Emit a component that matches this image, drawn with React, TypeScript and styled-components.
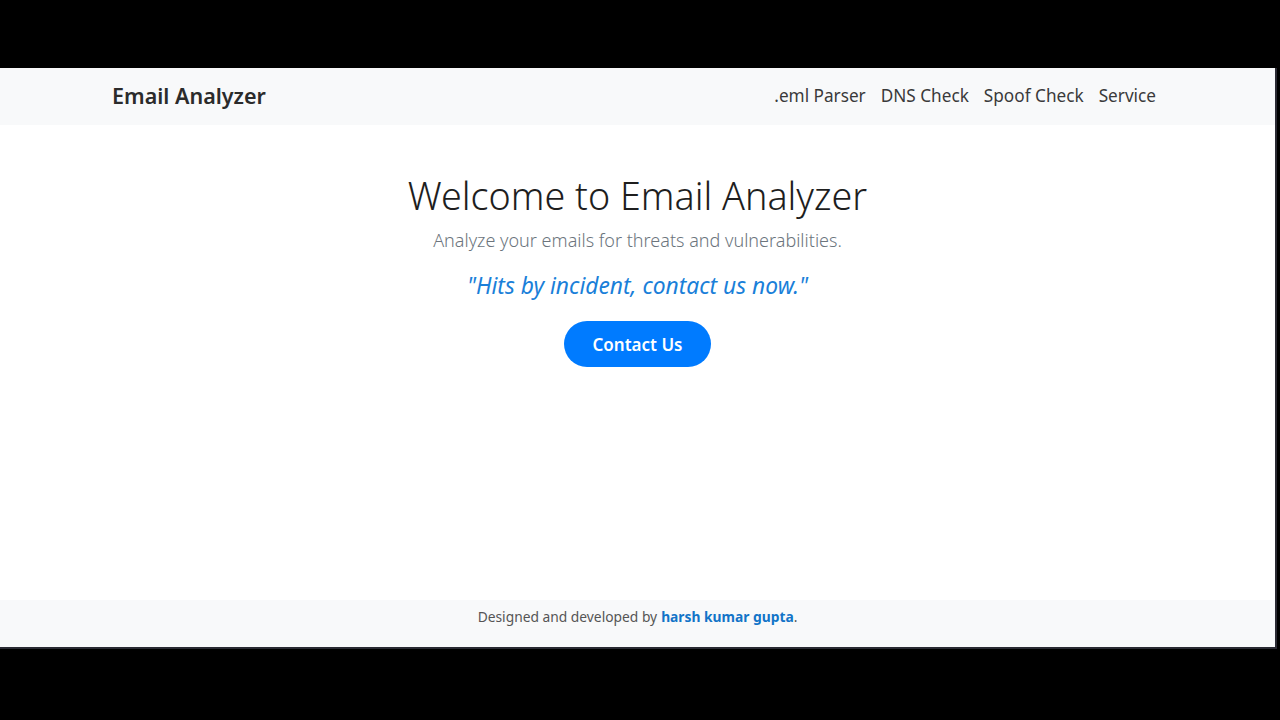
import React from 'react';
import styled, { createGlobalStyle } from 'styled-components';

const GlobalStyle = createGlobalStyle`
  html, body {
    margin: 0;
    padding: 0;
    background: #000;
  }
  body {
    font-family: 'Noto Sans', 'Open Sans', sans-serif;
  }
`;

const Screen = styled.div`
  width: 1280px;
  height: 720px;
  padding-top: 68px;
  box-sizing: border-box;
  background: #000;
`;

const Viewport = styled.div`
  width: 1277px;
  height: 581px;
  box-sizing: border-box;
  border-right: 2px solid #2a2a33;
  border-bottom: 2px solid #2a2a33;
  background: #fff;
  display: flex;
  flex-direction: column;
`;

const Navbar = styled.nav`
  height: 57px;
  flex-shrink: 0;
  box-sizing: border-box;
  background: #f8f9fa;
  display: flex;
  align-items: center;
  justify-content: space-between;
  padding: 0 119px 2px 112px;
`;

const Brand = styled.a`
  font-size: 21.5px;
  font-weight: 600;
  color: #2b2b2b;
  text-decoration: none;
`;

const NavLinks = styled.div`
  display: flex;
  gap: 15px;
`;

const NavLink = styled.a`
  font-size: 17.2px;
  color: #3a3a3a;
  text-decoration: none;
`;

const Main = styled.main`
  flex: 1;
  display: flex;
  flex-direction: column;
  align-items: center;
  padding-top: 48px;
`;

const Title = styled.h1`
  margin: 0;
  font-size: 37.7px;
  line-height: 46px;
  font-weight: 300;
  color: #1e1e1e;
`;

const Lead = styled.p`
  margin: 8px 0 0;
  font-size: 18px;
  line-height: 27px;
  font-weight: 300;
  color: #6c757d;
`;

const Quote = styled.p`
  margin: 15px 0 0;
  font-size: 22.8px;
  line-height: 33px;
  font-style: italic;
  font-weight: 400;
  color: #1a7fd9;
`;

const ContactButton = styled.button`
  margin-top: 19px;
  width: 147px;
  height: 46px;
  border: none;
  border-radius: 23px;
  background: #007bff;
  color: #fff;
  font-family: inherit;
  font-size: 17px;
  font-weight: 600;
  cursor: pointer;
`;

const Footer = styled.footer`
  height: 47px;
  flex-shrink: 0;
  box-sizing: border-box;
  background: #f8f9fa;
  display: flex;
  align-items: flex-start;
  justify-content: center;
  padding-top: 6px;
  font-size: 13.8px;
  line-height: 21px;
  color: #555;
`;

const AuthorLink = styled.a`
  color: #1274c8;
  font-weight: 700;
  text-decoration: none;
  margin-left: 4px;
`;

export default function App() {
  return (
    <>
      <GlobalStyle />
      <Screen>
        <Viewport>
          <Navbar>
            <Brand href="#">Email Analyzer</Brand>
            <NavLinks>
              <NavLink href="#">.eml Parser</NavLink>
              <NavLink href="#">DNS Check</NavLink>
              <NavLink href="#">Spoof Check</NavLink>
              <NavLink href="#">Service</NavLink>
            </NavLinks>
          </Navbar>
          <Main>
            <Title>Welcome to Email Analyzer</Title>
            <Lead>Analyze your emails for threats and vulnerabilities.</Lead>
            <Quote>"Hits by incident, contact us now."</Quote>
            <ContactButton>Contact Us</ContactButton>
          </Main>
          <Footer>
            Designed and developed by<AuthorLink href="#">harsh kumar gupta</AuthorLink>.
          </Footer>
        </Viewport>
      </Screen>
    </>
  );
}
